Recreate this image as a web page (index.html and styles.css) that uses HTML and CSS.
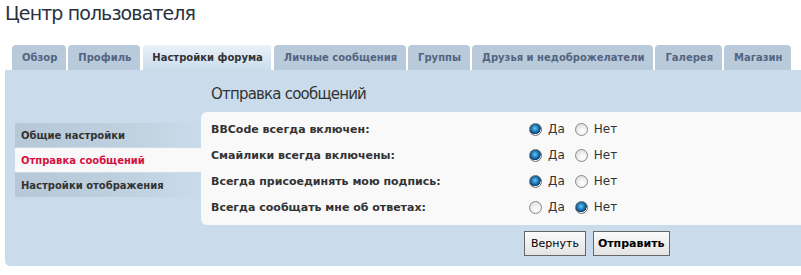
FILE: index.html
```html
<!DOCTYPE html>
<html lang="ru">
<head>
<meta charset="utf-8">
<title>Центр пользователя</title>
<link rel="stylesheet" href="styles.css">
</head>
<body>
<div class="page">
  <h1 class="title">Центр пользователя</h1>
  <ul class="tabs">
    <li class="tab">Обзор</li>
    <li class="tab">Профиль</li>
    <li class="tab tab-active">Настройки форума</li>
    <li class="tab">Личные сообщения</li>
    <li class="tab">Группы</li>
    <li class="tab">Друзья и недоброжелатели</li>
    <li class="tab">Галерея</li>
    <li class="tab">Магазин</li>
  </ul>
  <div class="panel">
    <ul class="nav">
      <li class="nav-item">Общие настройки</li>
      <li class="nav-item nav-active">Отправка сообщений</li>
      <li class="nav-item">Настройки отображения</li>
    </ul>
    <div class="main">
      <h2 class="heading">Отправка сообщений</h2>
      <div class="box">
        <div class="row">
          <span class="label">BBCode всегда включен:</span>
          <span class="opts">
            <label class="opt"><input type="radio" name="r1" checked> Да</label>
            <label class="opt"><input type="radio" name="r1"> Нет</label>
          </span>
        </div>
        <div class="row">
          <span class="label">Смайлики всегда включены:</span>
          <span class="opts">
            <label class="opt"><input type="radio" name="r2" checked> Да</label>
            <label class="opt"><input type="radio" name="r2"> Нет</label>
          </span>
        </div>
        <div class="row">
          <span class="label">Всегда присоединять мою подпись:</span>
          <span class="opts">
            <label class="opt"><input type="radio" name="r3" checked> Да</label>
            <label class="opt"><input type="radio" name="r3"> Нет</label>
          </span>
        </div>
        <div class="row">
          <span class="label">Всегда сообщать мне об ответах:</span>
          <span class="opts">
            <label class="opt"><input type="radio" name="r4"> Да</label>
            <label class="opt"><input type="radio" name="r4" checked> Нет</label>
          </span>
        </div>
      </div>
      <div class="buttons">
        <button class="btn" type="reset">Вернуть</button>
        <button class="btn btn-primary" type="submit">Отправить</button>
      </div>
    </div>
  </div>
</div>
</body>
</html>
```
FILE: styles.css
```css
html, body {
  margin: 0;
  padding: 0;
  background: #ffffff;
  overflow: hidden;
}

.page {
  padding-left: 5px;
  font-family: "DejaVu Sans", Verdana, sans-serif;
  color: #333333;
}

.title {
  margin: 0;
  height: 44px;
  padding-top: 1px;
  box-sizing: border-box;
  font-family: "DejaVu Sans", sans-serif;
  font-weight: normal;
  font-size: 19px;
  line-height: 24px;
  color: #28313f;
  letter-spacing: -0.9px;
}

.tabs {
  list-style: none;
  margin: 0;
  padding: 0 0 0 7px;
  display: flex;
  align-items: flex-end;
  gap: 2px;
  height: 26px;
}

.tab {
  height: 25px;
  box-sizing: border-box;
  padding: 0 9px 0 10px;
  background: #b9cada;
  border-radius: 4px 4px 0 0;
  font-size: 10px;
  font-weight: bold;
  line-height: 25px;
  color: #536482;
  white-space: nowrap;
}

.tab-active {
  height: 26px;
  line-height: 25px;
  border: 1px solid #ffffff;
  border-bottom: none;
  padding: 0 8px 0 9px;
  background: linear-gradient(#eaf2f9, #cadceb);
  color: #333333;
}

.panel {
  display: flex;
  background: #cadceb;
  border-radius: 0 0 0 5px;
  height: 196px;
  box-sizing: border-box;
  padding: 0 0 10px 10px;
}

.nav {
  list-style: none;
  margin: 53px 0 0 0;
  padding: 0;
  width: 186px;
  display: flex;
  flex-direction: column;
  gap: 1px;
}

.nav-item {
  height: 24px;
  line-height: 25px;
  padding-left: 6px;
  font-size: 10px;
  font-weight: bold;
  color: #333333;
  background: linear-gradient(90deg, #b6c8d7 0%, #bfd0df 60%, #cadceb 100%);
  white-space: nowrap;
}

.nav-active {
  background: #f9f9f9;
  color: #d31141;
}

.main {
  flex: 1;
  display: flex;
  flex-direction: column;
}

.heading {
  margin: 0;
  padding: 14px 10px 8px 10px;
  font-family: "DejaVu Sans", sans-serif;
  font-weight: normal;
  font-size: 15px;
  line-height: 20px;
  letter-spacing: -0.8px;
  color: #333333;
}

.box {
  background: #f9f9f9;
  border-radius: 6px 0 0 6px;
  padding: 4px 0 5px 10px;
}

.row {
  display: flex;
  align-items: center;
  height: 26px;
}

.label {
  width: 318px;
  font-size: 11px;
  font-weight: bold;
  color: #333333;
  white-space: nowrap;
}

.opts {
  display: flex;
  gap: 10px;
}

.opt {
  display: flex;
  align-items: center;
  gap: 6px;
  font-size: 12px;
  color: #333333;
}

.opt input {
  appearance: none;
  -webkit-appearance: none;
  margin: 0;
  width: 13px;
  height: 13px;
  border-radius: 50%;
  border: 1px solid #8a8a8a;
  background: radial-gradient(circle at 60% 65%, #ffffff 0%, #f2f2f2 40%, #cfcfcf 100%);
  box-sizing: border-box;
}

.opt input:checked {
  background:
    radial-gradient(circle at 45% 40%, #6fc3f0 0%, #1f7fc0 35%, #0a3e6e 62%, transparent 66%),
    radial-gradient(circle, #ffffff 0%, #e8e8e8 100%);
  border-color: #6e6e6e;
}

.buttons {
  display: flex;
  gap: 7px;
  padding: 6px 0 0 323px;
}

.btn {
  height: 25px;
  margin: 0;
  padding: 0 6px;
  border: 1px solid #666666;
  background: linear-gradient(#fbfbfb, #e3e3e3);
  font-family: "DejaVu Sans", sans-serif;
  font-size: 11px;
  color: #000000;
}

.btn-primary {
  font-weight: bold;
  padding: 0 4px;
}
```
